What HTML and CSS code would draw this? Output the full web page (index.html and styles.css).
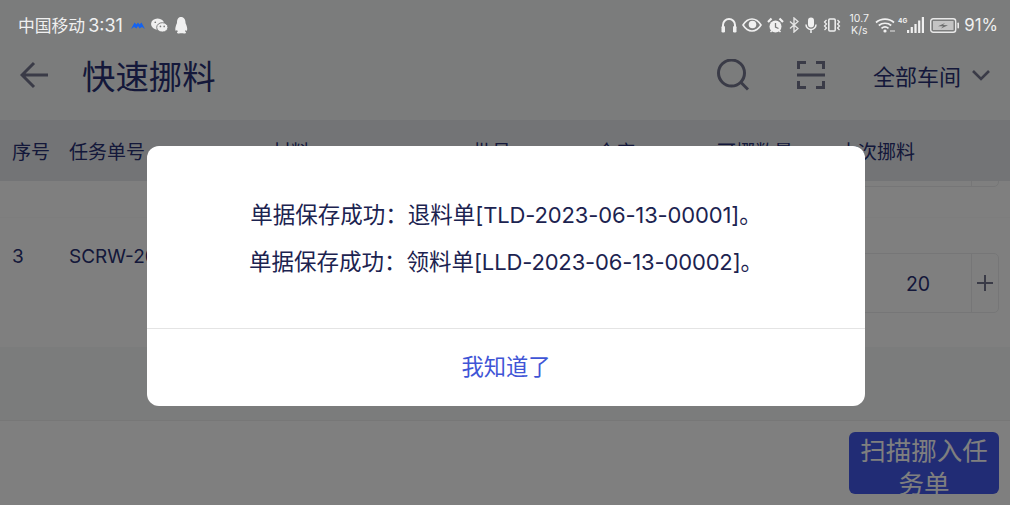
FILE: index.html
```html
<!DOCTYPE html>
<html lang="zh-CN">
<head>
<meta charset="utf-8">
<title>快速挪料</title>
<link rel="stylesheet" href="styles.css">
</head>
<body>
<div class="screen">
  <div class="status">
    <span class="carrier">中国移动</span><span class="clock">3:31</span>
    <svg class="si s-bird" viewBox="0 0 14 8"><path d="M0 8 3.500 1.500 5.500 3.500 7 1.500l1.500 2 2-2L14 8l-3-2L8.500 7.500 7 5 5.500 7.500 3 6z" fill="#1463f0"/></svg>
    <svg class="si s-wechat" viewBox="0 0 18 16"><ellipse cx="7" cy="6.500" rx="7" ry="6" fill="#f0f0f0"/><ellipse cx="12" cy="10" rx="6" ry="5" fill="#f0f0f0" stroke="#7a7b7b"/><circle cx="10" cy="9" r=".9" fill="#7a7b7b"/><circle cx="14" cy="9" r=".9" fill="#7a7b7b"/><circle cx="4.500" cy="4.500" r=".9" fill="#7a7b7b"/></svg>
    <svg class="si s-qq" viewBox="0 0 14 17"><path d="M7 0c3 0 4.500 2.500 4.500 5.500 0 1 .5 1.500 1 3s1 3.500.5 5c-.4.800-1 0-1.500-.5l-.3 1.500c.6.500 1 1 .8 1.500-.3.500-2 .5-4.500.3-2.500.2-4.200.2-4.500-.3-.2-.5.200-1 .8-1.500L3 13c-.5.500-1.100 1.300-1.500.5-.5-1.500 0-3.500.5-5s1-2 1-3C3 2.500 4 0 7 0z" fill="#f0f0f0"/></svg>
    <span class="grow"></span>
    <svg class="si s-head" viewBox="0 0 16 16"><path d="M2 14V8a6 6 0 0 1 12 0v6" fill="none" stroke="#f0f0f0" stroke-width="2"/><rect x="0.500" y="9" width="3.500" height="6.500" rx="1.200" fill="#f0f0f0"/><rect x="12" y="9" width="3.500" height="6.500" rx="1.200" fill="#f0f0f0"/></svg>
    <svg class="si s-eye" viewBox="0 0 20 14"><path d="M1 7c2.500-4 5.500-6 9-6s6.500 2 9 6c-2.500 4-5.500 6-9 6S3.500 11 1 7z" fill="none" stroke="#f0f0f0" stroke-width="1.600"/><circle cx="10.500" cy="6.500" r="3.800" fill="#f0f0f0"/></svg>
    <svg class="si s-alarm" viewBox="0 0 17 17"><circle cx="8.500" cy="9.500" r="6" fill="#f0f0f0"/><path d="M8.500 6v4l3 1.500" fill="none" stroke="#7a7b7b" stroke-width="1.300"/><path d="M1 5 4.500 1.500M16 5l-3.500-3.500" stroke="#f0f0f0" stroke-width="2.200"/><path d="m3.500 15 1.500-1.500M13.500 15 12 13.500" stroke="#f0f0f0" stroke-width="1.500"/></svg>
    <svg class="si s-bt" viewBox="0 0 10 16"><path d="M1 4.500l8 7L5 15V1l4 3.500-8 7" fill="none" stroke="#e4e4e4" stroke-width="1.400"/></svg>
    <svg class="si s-mic" viewBox="0 0 12 16"><rect x="3" y="0.500" width="6" height="10" rx="3" fill="#f0f0f0"/><path d="M1 7.500a5 5 0 0 0 10 0M6 12.500V16" fill="none" stroke="#f0f0f0" stroke-width="1.500"/></svg>
    <svg class="si s-vib" viewBox="0 0 18 14"><rect x="5.800" y="1" width="6.400" height="12" rx="1" fill="none" stroke="#f0f0f0" stroke-width="1.500"/><path d="M3.500 2 1.500 4 3.500 6 1.500 8 3.500 10 1.500 12M14.500 2 16.500 4 14.500 6 16.500 8 14.500 10 16.500 12" fill="none" stroke="#f0f0f0" stroke-width="1.200"/></svg>
    <span class="speed"><span>10.7</span><span>K/s</span></span>
    <svg class="si s-wifi" viewBox="0 0 20 16"><path d="M1 5.500c5-4.500 13-4.500 18 0M3.800 8.500c3.500-3 9-3 12.400 0M6.500 11.300c2-1.700 5-1.700 7 0" fill="none" stroke="#f0f0f0" stroke-width="1.700"/><circle cx="10" cy="14" r="1.600" fill="#f0f0f0"/><path d="M15 14h5" stroke="#f0f0f0" stroke-width=".9"/></svg>
    <span class="net">4G</span>
    <svg class="si s-sig" viewBox="0 0 17 16"><rect x="0" y="13" width="2.200" height="3" fill="#f0f0f0"/><rect x="3.700" y="10" width="2.200" height="6" fill="#f0f0f0"/><rect x="7.400" y="7" width="2.200" height="9" fill="#f0f0f0"/><rect x="11.100" y="3.500" width="2.200" height="12.500" fill="#f0f0f0"/><rect x="14.800" y="0" width="2.200" height="16" fill="#f0f0f0"/></svg>
    <svg class="si s-bat" viewBox="0 0 29 15"><rect x=".7" y=".7" width="25" height="13.600" rx="2.500" fill="none" stroke="#e8e8e8" stroke-width="1.400"/><rect x="3" y="3" width="20.500" height="9" fill="#c4c4c4"/><path d="M8 8.200 15 5l-2 2 5 .2L11 10.500l2-2.200z" fill="#6d6e6e"/><rect x="27.400" y="4.500" width="1.600" height="6" rx=".8" fill="#e8e8e8"/></svg>
    <span class="pct">91%</span>
  </div>

  <header class="appbar">
    <svg class="ic-back" viewBox="0 0 28 28"><path d="M14 2 2 14l12 12M2 14h26" fill="none" stroke="currentColor" stroke-width="3"/></svg>
    <h1 class="title">快速挪料</h1>
    <span class="grow"></span>
    <svg class="ic-search" viewBox="0 0 32 32"><circle cx="14.500" cy="14" r="13" fill="none" stroke="currentColor" stroke-width="3"/><path d="m24 23.500 7 7" stroke="currentColor" stroke-width="3"/></svg>
    <svg class="ic-scan" viewBox="0 0 28 28"><path d="M1.500 8V1.500H9M19 1.500h7.500V8M1.500 20v6.500H9M19 26.500h7.500V20" fill="none" stroke="currentColor" stroke-width="3"/><path d="M0 14h28" stroke="currentColor" stroke-width="3"/></svg>
    <button class="workshop"><span>全部车间</span>
      <svg class="ic-chev" viewBox="0 0 18 11"><path d="m1 1 8 8 8-8" fill="none" stroke="currentColor" stroke-width="2.600"/></svg>
    </button>
  </header>

  <div class="thead">
    <span>序号</span><span>任务单号</span><span>材料</span><span>批号</span><span>仓库</span><span>可挪数量</span><span class="th-qty">本次挪料</span>
  </div>

  <div class="tbody">
    <div class="row row-cut">
      <div class="stepper"><span class="step-btn"></span><span class="step-val"></span><span class="step-btn"></span></div>
    </div>
    <div class="row row-full">
      <span class="cell">3</span><span class="cell">SCRW-2023-06-13</span><span></span><span></span><span></span><span></span>
      <div class="stepper">
        <span class="step-btn"></span>
        <span class="step-val">20</span>
        <span class="step-btn"><svg class="ic-plus" viewBox="0 0 16 16"><path d="M8 0v16M0 8h16" stroke="currentColor" stroke-width="2"/></svg></span>
      </div>
    </div>
  </div>

  <div class="grow"></div>

  <footer class="footer">
    <button class="scan-btn">扫描挪入任务单</button>
  </footer>

  <div class="scrim"></div>

  <div class="dialog">
    <div class="dialog-body">
      <p>单据保存成功：退料单<span class="code">[TLD-2023-06-13-00001]</span>。</p>
      <p>单据保存成功：领料单<span class="code">[LLD-2023-06-13-00002]</span>。</p>
    </div>
    <div class="dialog-action">我知道了</div>
  </div>
</div>
</body>
</html>
```
FILE: styles.css
```css
* { box-sizing: border-box; }
html, body { margin: 0; padding: 0; }
body { font-family: "Inter", "Noto Sans CJK SC", sans-serif; }
.screen {
  position: relative;
  width: 1010px;
  height: 505px;
  overflow: hidden;
  display: flex;
  flex-direction: column;
  background: #f6f8f8;
  color: #283074;
}
.grow { flex: 1; }

.status {
  position: relative;
  z-index: 3;
  height: 50px;
  display: flex;
  align-items: center;
  padding: 0 12px 0 18px;
  color: #f0f0f0;
  font-size: 16.800px;
}
.si { display: block; flex: none; }
.carrier { font-family: "Noto Sans CJK SC", sans-serif; }
.clock { margin-left: 3px; font-size: 18px; }
.s-bird { width: 14px; height: 8px; margin-left: 8px; }
.s-wechat { width: 17px; height: 15px; margin-left: 6px; }
.s-qq { width: 14px; height: 17px; margin-left: 6px; }
.s-head { width: 16px; height: 16px; }
.s-eye { width: 20px; height: 14px; margin-left: 5px; }
.s-alarm { width: 17px; height: 17px; margin-left: 5px; }
.s-bt { width: 10px; height: 16px; margin-left: 5px; }
.s-mic { width: 12px; height: 16px; margin-left: 6px; }
.s-vib { width: 18px; height: 14px; margin-left: 6px; }
.speed {
  display: flex;
  flex-direction: column;
  align-items: center;
  margin-left: 9px;
  font-size: 10.500px;
  line-height: 12px;
}
.s-wifi { width: 20px; height: 16px; margin-left: 6px; }
.net { align-self: center; margin: -8px 0 0 3px; font-size: 6.500px; font-weight: 700; }
.s-sig { width: 17px; height: 16px; }
.s-bat { width: 29px; height: 15px; margin-left: 6px; }
.pct { margin-left: 5px; font-size: 16.800px; }

.appbar {
  height: 70px;
  display: flex;
  align-items: center;
  padding: 0 20px 20px;
  color: #74768e;
}
.ic-back { width: 28px; height: 28px; flex: none; }
.title {
  margin: 0 0 0 34px;
  font: 400 33.400px/1 "Noto Sans CJK SC", sans-serif;
  color: #283074;
}
.ic-search { width: 32px; height: 32px; flex: none; }
.ic-scan { width: 28px; height: 28px; margin: 0 0 0 48px; flex: none; }
.workshop {
  display: flex;
  align-items: center;
  margin: 0 0 0 48px;
  padding: 0;
  border: 0;
  background: none;
  color: #283074;
  font: 400 22px/1 "Noto Sans CJK SC", sans-serif;
}
.ic-chev { width: 18px; height: 11px; margin-left: 11px; color: #74768e; }

.thead, .row {
  display: grid;
  grid-template-columns: 57px 203px 201px 124px 120px 120px 162px;
  padding: 0 11px 0 12px;
}
.thead {
  height: 61px;
  padding-bottom: 1px;
  align-items: center;
  background: #e6e8ec;
  font: 400 19px/1 "Noto Sans CJK SC", sans-serif;
}
.th-qty { padding-left: 2px; white-space: nowrap; }

.tbody { height: 166px; overflow: hidden; background: #fff; }
.row-cut {
  height: 37px;
  overflow: hidden;
  border-bottom: 1px solid #fafafa;
}
.row-cut .stepper { grid-column: 7; margin-top: -54px; }
.row-full { height: 129px; }
.cell { padding-top: 26px; font-size: 19px; line-height: 26px; white-space: nowrap; overflow: hidden; }
.row-full .stepper { margin-top: 35px; }

.stepper {
  height: 60px;
  display: flex;
  align-items: center;
  border: 1px solid #ecedee;
  border-radius: 5px;
}
.step-btn {
  width: 27px;
  height: 100%;
  display: flex;
  align-items: center;
  justify-content: center;
  color: #74768e;
}
.step-btn:last-child { border-left: 1px solid #ecedee; }
.ic-plus { width: 16px; height: 16px; }
.step-val { flex: 1; text-align: center; font-size: 19.500px; padding-top: 2px; }

.footer {
  height: 85px;
  display: flex;
  justify-content: flex-end;
  align-items: flex-start;
  padding: 11px 11px 0 0;
  background: #fff;
  border-top: 1px solid #eeeeee;
}
.scan-btn {
  display: block;
  width: 150px;
  height: 62px;
  padding: 0 10px;
  overflow: hidden;
  border: 0;
  border-radius: 6px;
  background: #4258ea;
  color: #fff;
  text-align: center;
  font: 400 25.500px/33px "Noto Sans CJK SC", sans-serif;
}

.scrim {
  position: absolute;
  inset: 0;
  z-index: 1;
  background: rgba(0, 0, 0, .5);
}
.dialog {
  position: absolute;
  z-index: 2;
  left: 147px;
  top: 146px;
  width: 718px;
  height: 260px;
  display: flex;
  flex-direction: column;
  background: #fff;
  border-radius: 12px;
}
.dialog-body {
  height: 183px;
  padding-top: 45px;
  border-bottom: 1px solid #e4e4e4;
  color: #1c2350;
  text-align: center;
  font: 400 22.500px/45px "Noto Sans CJK SC", sans-serif;
}
.dialog-body p { margin: 0; }
.code { font-family: "Inter", sans-serif; font-size: 22px; letter-spacing: -.15px; }
.dialog-action {
  flex: 1;
  display: flex;
  align-items: center;
  justify-content: center;
  padding-bottom: 5px;
  color: #3f55d6;
  font: 400 22.300px/1 "Noto Sans CJK SC", sans-serif;
}
```
